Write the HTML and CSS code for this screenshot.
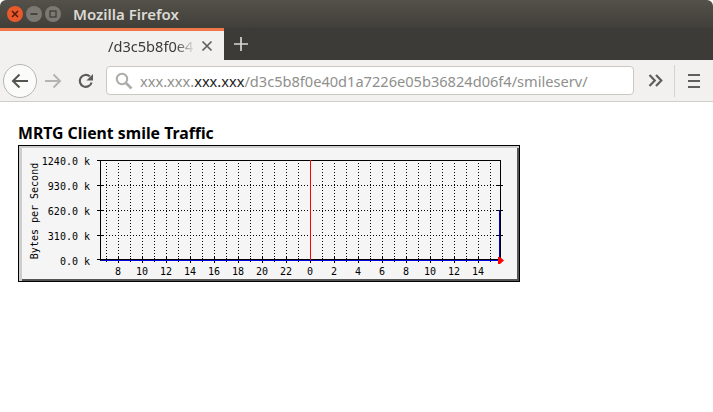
FILE: index.html
```html
<!DOCTYPE html>
<html>
<head>
    <title>MRTG Client smile Traffic</title>
    <link rel="stylesheet" href="styles.css">
</head>
<body>
    <header class="titlebar">
        <div class="win-buttons">
            <span class="win-btn win-close">
                <svg width="8" height="8" viewBox="0 0 8 8"><path d="M1 1L7 7M7 1L1 7" stroke="#5a1a08" stroke-width="1.6"/></svg>
            </span>
            <span class="win-btn">
                <svg width="8" height="8" viewBox="0 0 8 8"><path d="M0.5 4H7.5" stroke="#3a3935" stroke-width="1.6"/></svg>
            </span>
            <span class="win-btn">
                <svg width="8" height="8" viewBox="0 0 8 8"><rect x="1" y="1" width="6" height="6" fill="none" stroke="#3a3935" stroke-width="1.2"/></svg>
            </span>
        </div>
        <span class="win-title">Mozilla Firefox</span>
    </header>

    <div class="tabstrip">
        <div class="tab">
            <span class="tab-label">/d3c5b8f0e4</span>
            <svg class="tab-close" width="12" height="12" viewBox="0 0 12 12"><path d="M1.5 1.5L10.5 10.5M10.5 1.5L1.5 10.5" stroke="#5f5f5c" stroke-width="1.7"/></svg>
        </div>
        <svg class="new-tab" width="14" height="14" viewBox="0 0 14 14"><path d="M7 0V14M0 7H14" stroke="#d8d7d3" stroke-width="1.7"/></svg>
    </div>

    <div class="toolbar">
        <span class="back-btn">
            <svg width="18" height="16" viewBox="0 0 18 16"><path d="M17 8H2M8.5 1.5L2 8L8.5 14.5" fill="none" stroke="#55554f" stroke-width="2"/></svg>
        </span>
        <svg class="fwd-btn" width="17" height="16" viewBox="0 0 17 16"><path d="M0 8H15M8.5 1.5L15 8L8.5 14.5" fill="none" stroke="#b4b4b0" stroke-width="2"/></svg>
        <svg class="reload-btn" width="16" height="16" viewBox="0 0 16 16"><path d="M13.6 9.5A6 6 0 1 1 11.8 3.4" fill="none" stroke="#5b5b57" stroke-width="2.1"/><path d="M15 1V7.6H8.4Z" fill="#5b5b57"/></svg>
        <div class="urlbar">
            <svg class="url-search" width="18" height="18" viewBox="0 0 18 18"><circle cx="7" cy="7" r="5.2" fill="none" stroke="#acaca8" stroke-width="2"/><path d="M11 11L16.5 16.5" stroke="#acaca8" stroke-width="2.6"/></svg>
            <span class="url-text">xxx.xxx.<b>xxx.xxx</b>/d3c5b8f0e40d1a7226e05b36824d06f4/smileserv/</span>
        </div>
        <svg class="overflow-btn" width="15" height="13" viewBox="0 0 15 13"><path d="M1.5 1L6.8 6.5L1.5 12M8 1L13.3 6.5L8 12" fill="none" stroke="#5f5f5b" stroke-width="2.2"/></svg>
        <span class="toolbar-sep"></span>
        <span class="menu-btn"><i></i><i></i><i></i></span>
    </div>

    <main class="page">
        <h1>MRTG Client smile Traffic</h1>
        <div class="graph">
            <svg width="496" height="131" viewBox="21 148 496 131">
                <!-- grid -->
                <path class="grid" d="M106.5 160V260M118.5 160V260M130.5 160V260M142.5 160V260M154.5 160V260M166.5 160V260M178.5 160V260M190.5 160V260M202.5 160V260M214.5 160V260M226.5 160V260M238.5 160V260M250.5 160V260M262.5 160V260M274.5 160V260M286.5 160V260M298.5 160V260M322.5 160V260M334.5 160V260M346.5 160V260M358.5 160V260M370.5 160V260M382.5 160V260M394.5 160V260M406.5 160V260M418.5 160V260M430.5 160V260M442.5 160V260M454.5 160V260M466.5 160V260M478.5 160V260M490.5 160V260"/>
                <path class="grid" d="M100 185.5H500M100 210.5H500M100 235.5H500"/>
                <!-- ticks and axes -->
                <path class="axis" d="M97 160.5H501M100.5 160V261M500.5 160V261M97 185.5H103M97 210.5H103M97 235.5H103M97 259.5H501M497 185.5H503M497 210.5H503M497 235.5H503"/>
                <path class="axis" d="M106.5 258V262M118.5 257V263M130.5 258V262M142.5 257V263M154.5 258V262M166.5 257V263M178.5 258V262M190.5 257V263M202.5 258V262M214.5 257V263M226.5 258V262M238.5 257V263M250.5 258V262M262.5 257V263M274.5 258V262M286.5 257V263M298.5 258V262M310.5 257V263M322.5 258V262M334.5 257V263M346.5 258V262M358.5 257V263M370.5 258V262M382.5 257V263M394.5 258V262M406.5 257V263M418.5 258V262M430.5 257V263M442.5 258V262M454.5 257V263M466.5 258V262M478.5 257V263M490.5 258V262"/>
                <!-- data -->
                <path class="data" d="M101 260.5H499.5V210"/>
                <path class="now" d="M310.5 160V260"/>
                <path class="arrow" d="M498 257H500L504 260.5L500 264H498Z"/>
                <!-- labels -->
                <text class="lbl-y" x="90" y="165">1240.0 k</text>
                <text class="lbl-y" x="90" y="190">930.0 k</text>
                <text class="lbl-y" x="90" y="215">620.0 k</text>
                <text class="lbl-y" x="90" y="240">310.0 k</text>
                <text class="lbl-y" x="90" y="265">0.0 k</text>
                <text class="lbl-title" transform="translate(38 211) rotate(-90)">Bytes per Second</text>
                <text class="lbl-x" x="118" y="275">8</text>
                <text class="lbl-x" x="142" y="275">10</text>
                <text class="lbl-x" x="166" y="275">12</text>
                <text class="lbl-x" x="190" y="275">14</text>
                <text class="lbl-x" x="214" y="275">16</text>
                <text class="lbl-x" x="238" y="275">18</text>
                <text class="lbl-x" x="262" y="275">20</text>
                <text class="lbl-x" x="286" y="275">22</text>
                <text class="lbl-x" x="310" y="275">0</text>
                <text class="lbl-x" x="334" y="275">2</text>
                <text class="lbl-x" x="358" y="275">4</text>
                <text class="lbl-x" x="382" y="275">6</text>
                <text class="lbl-x" x="406" y="275">8</text>
                <text class="lbl-x" x="430" y="275">10</text>
                <text class="lbl-x" x="454" y="275">12</text>
                <text class="lbl-x" x="478" y="275">14</text>
            </svg>
        </div>
    </main>
</body>
</html>
```

FILE: styles.css
```css
html, body {
    margin: 0;
    padding: 0;
    height: 412px;
    overflow: hidden;
    background: #fff;
    font-family: "Noto Sans", "Open Sans", sans-serif;
}

.titlebar {
    height: 28px;
    background: linear-gradient(#54514a, #413f3a);
    border-radius: 6px 6px 0 0;
    display: flex;
    align-items: center;
    padding-left: 7px;
    box-sizing: border-box;
}
.win-buttons {
    display: flex;
    gap: 3px;
}
.win-btn {
    width: 16px;
    height: 16px;
    border-radius: 50%;
    background: #7b7972;
    display: flex;
    align-items: center;
    justify-content: center;
}
.win-close {
    background: #e9592c;
}
.win-title {
    margin-left: 12px;
    color: #dcdad5;
    font-size: 15px;
    font-weight: 600;
}

.tabstrip {
    height: 32px;
    background: #3c3b37;
    display: flex;
    align-items: center;
}
.tab {
    width: 224px;
    height: 32px;
    box-sizing: border-box;
    background: #f2f1ef;
    border-top: 3px solid #f0774a;
    display: flex;
    align-items: center;
    padding-left: 108px;
}
.tab-label {
    width: 87px;
    white-space: nowrap;
    font-size: 14.6px;
    color: #3b3b38;
    -webkit-mask-image: linear-gradient(to right, #000 78%, transparent 100%);
    mask-image: linear-gradient(to right, #000 78%, transparent 100%);
}
.tab-close {
    margin-left: 6px;
}
.new-tab {
    margin-left: 10px;
}

.toolbar {
    height: 42px;
    box-sizing: border-box;
    background: #f2f1ef;
    border-bottom: 1px solid #cfcecb;
    display: flex;
    align-items: center;
    padding-left: 3px;
}
.back-btn {
    width: 32px;
    height: 32px;
    border-radius: 50%;
    border: 1px solid #b5b5b1;
    background: #fbfbfa;
    display: flex;
    align-items: center;
    justify-content: center;
}
.fwd-btn {
    margin-left: 8px;
}
.reload-btn {
    margin-left: 16px;
}
.urlbar {
    width: 528px;
    height: 29px;
    margin-left: 12px;
    box-sizing: border-box;
    background: #fff;
    border: 1px solid #c9c8c4;
    border-radius: 4px;
    display: flex;
    align-items: center;
    padding-left: 8px;
}
.url-text {
    margin-left: 7px;
    font-size: 14.6px;
    color: #8f8f8c;
    white-space: nowrap;
}
.url-text b {
    font-weight: 400;
    color: #222;
}
.overflow-btn {
    margin-left: 14px;
}
.toolbar-sep {
    width: 1px;
    height: 32px;
    margin-left: 11px;
    background: #d3d2ce;
}
.menu-btn {
    margin-left: 13px;
    width: 12px;
    display: flex;
    flex-direction: column;
    gap: 4px;
}
.menu-btn i {
    height: 2px;
    background: #5f5f5b;
}

.page {
    padding: 21px 18px 0;
}
h1 {
    margin: 0 0 2px;
    font-size: 15.8px;
    line-height: 20px;
    font-weight: 700;
    color: #000;
}
.graph {
    width: 502px;
    height: 137px;
    box-sizing: border-box;
    border: 1px solid #000;
    background: #f5f5f5;
    box-shadow: inset 3px 2px 0 #cdcdcd, inset -2px -2px 0 #555;
    padding: 2px;
}
.graph svg {
    display: block;
}

.grid {
    fill: none;
    stroke: #000;
    stroke-dasharray: 1 2;
}
.axis {
    fill: none;
    stroke: #000;
}
.data {
    fill: none;
    stroke: #0000d8;
    stroke-width: 1;
}
.now {
    stroke: #f00;
    stroke-width: 1;
}
.arrow {
    fill: #f00;
}
.lbl-y, .lbl-x, .lbl-title {
    font-family: "DejaVu Sans Mono", monospace;
    font-size: 10px;
    fill: #000;
}
.lbl-y {
    text-anchor: end;
}
.lbl-x {
    text-anchor: middle;
}
.lbl-title {
    text-anchor: middle;
}
```
